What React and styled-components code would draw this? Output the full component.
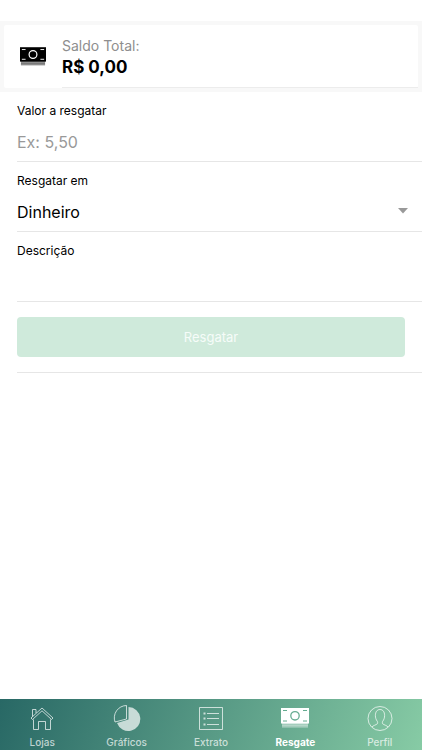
import React, { useState } from 'react'
import styled, { createGlobalStyle } from 'styled-components'

const GlobalStyle = createGlobalStyle`
*{
    box-sizing: border-box;
}
body{
    margin: 0;
    background-color: #fff;
    color: #000;
    font-family: Inter, "Liberation Sans", sans-serif;
}
`;

const Container = styled.div`
min-height: 100vh;
display: flex;
flex-direction: column;
padding-top: 21px;
`;

const Header = styled.header`
background-color: #f8f8f8;
padding: 4px;
`;

const Card = styled.section`
display: flex;
align-items: stretch;
background-color: #fff;
border-radius: 2px;
padding-left: 16px;
`;

const CardIcon = styled.div`
display: flex;
align-items: center;
width: 42px;
`;

const Balance = styled.div`
flex: 1;
height: 63px;
padding-top: 11px;
border-bottom: 1px solid #ececec;
`;

const BalanceLabel = styled.p`
margin: 0;
font-size: 14px;
line-height: 20px;
color: #8e8e8e;
`;

const BalanceValue = styled.h1`
margin: 0;
font-size: 17px;
line-height: 22px;
font-weight: 700;
`;

const Form = styled.form`
flex: 1;
padding-left: 17px;
`;

const Field = styled.div`
position: relative;
display: flex;
flex-direction: column;
height: 70px;
padding-top: 9px;
border-bottom: 1px solid #e6e6e6;
`;

const Label = styled.label`
font-size: 12px;
line-height: 20px;
`;

const Input = styled.input`
width: 100%;
height: 40px;
margin: 0;
padding: 2px 16px 0 0;
border: none;
outline: none;
background: transparent;
font-family: inherit;
font-size: 16px;
color: #000;
&::placeholder{
    color: #999;
    opacity: 1;
}
`;

const Select = styled.select`
width: 100%;
height: 40px;
margin: 0;
padding: 2px 32px 0 0;
border: none;
outline: none;
appearance: none;
background: transparent;
font-family: inherit;
font-size: 16px;
color: #000;
`;

const Arrow = styled.svg`
position: absolute;
right: 13px;
bottom: 17px;
pointer-events: none;
`;

const Actions = styled.div`
padding: 15px 17px 15px 0;
border-bottom: 1px solid #e6e6e6;
`;

const Button = styled.button`
display: block;
width: 100%;
height: 40px;
border: none;
border-radius: 4px;
background-color: #cfeadb;
color: #f6fcf9;
font-family: inherit;
font-size: 13px;
`;

const TabBar = styled.nav`
display: flex;
height: 51px;
background: linear-gradient(110deg, #286865 0%, #87cba5 100%);
`;

const Tab = styled.a`
flex: 1;
display: flex;
flex-direction: column;
align-items: center;
justify-content: space-between;
padding: 5px 0 1px;
font-size: 10px;
line-height: 14px;
font-weight: ${props => props.$active ? 700 : 500};
color: ${props => props.$active ? "#fff" : "rgba(255, 255, 255, 0.7)"};
text-decoration: none;
`;

const MoneyIcon = ({ width, height, fill, detail, stack }) => (
    <svg width={width} height={height} viewBox="0 0 28 22" aria-hidden="true">
        <rect x="1" y="16" width="26" height="4.500" fill={stack} />
        <path d="M1 17.500h26M1 19.500h26" stroke={detail} strokeWidth="0.400" opacity="0.500" />
        <rect x="0" y="1" width="28" height="15.500" fill={fill} />
        <circle cx="14" cy="8.800" r="4.200" fill="none" stroke={detail} strokeWidth="1.300" />
        <path d="M2 3.500h4M22 3.500h4M2 14h4M22 14h4" stroke={detail} strokeWidth="1" />
    </svg>
)

const HomeIcon = () => (
    <svg width="28" height="28" viewBox="0 0 28 28" fill="none" stroke="currentColor" aria-hidden="true">
        <path d="M3 14 14 4l11 10-1.500 1.500L14 6.800l-9.500 8.700z" />
        <path d="M5.500 15.500v10h5v-8h7v8h5v-10M4.500 12.500V5.500h3.500v3.500" />
    </svg>
)

const ChartIcon = () => (
    <svg width="28" height="28" viewBox="0 0 28 28" aria-hidden="true">
        <path d="M15.500 3A12 12 0 1 1 4 19L15.500 15.500z" fill="currentColor" />
        <path d="M13.500 1.500V15L2 18A12.400 12.400 0 0 1 13.500 1.500z" fill="none" stroke="currentColor" />
    </svg>
)

const ListIcon = () => (
    <svg width="28" height="28" viewBox="0 0 28 28" fill="none" stroke="currentColor" aria-hidden="true">
        <path d="M2.500 3.500h23v22h-23zM10 9.500h12M10 14.500h12M10 20.500h12" />
        <path d="M6.500 9.500h2M6.500 14.500h2M6.500 20.500h2" strokeWidth="2" />
    </svg>
)

const UserIcon = () => (
    <svg width="28" height="28" viewBox="0 0 28 28" fill="none" stroke="currentColor" aria-hidden="true">
        <circle cx="14" cy="14.500" r="12" />
        <path d="M6 23c1-1.500 4-2 5.300-3.200.5-.6.4-1.800 0-2.500-1.300-1.600-1.900-3.600-1.900-5.800C9.400 8 11 5.500 14 5.500s4.600 2.500 4.600 6c0 2.200-.6 4.200-1.900 5.800-.4.7-.5 1.900 0 2.500C18 21 21 21.500 22 23" />
    </svg>
)

const tabs = [
    { id: "lojas", title: "Lojas", icon: <HomeIcon /> },
    { id: "graficos", title: "Gráficos", icon: <ChartIcon /> },
    { id: "extrato", title: "Extrato", icon: <ListIcon /> },
    { id: "resgate", title: "Resgate", icon: <MoneyIcon width={28} height={28} fill="#fff" detail="#66ac91" stack="rgba(255, 255, 255, 0.5)" /> },
    { id: "perfil", title: "Perfil", icon: <UserIcon /> },
]

const App = () => {
    const [valor, setValor] = useState("")
    const [tipo, setTipo] = useState("dinheiro")
    const [descricao, setDescricao] = useState("")

    return (
        <Container>
            <GlobalStyle />
            <Header>
                <Card>
                    <CardIcon>
                        <MoneyIcon width={26} height={21} fill="#000" detail="#fff" stack="#777" />
                    </CardIcon>
                    <Balance>
                        <BalanceLabel>Saldo Total:</BalanceLabel>
                        <BalanceValue>R$ 0,00</BalanceValue>
                    </Balance>
                </Card>
            </Header>
            <Form onSubmit={(e) => e.preventDefault()}>
                <Field>
                    <Label htmlFor="valor">Valor a resgatar</Label>
                    <Input id="valor" inputMode="decimal" placeholder="Ex: 5,50" value={valor} onChange={(e) => setValor(e.target.value)} />
                </Field>
                <Field>
                    <Label htmlFor="tipo">Resgatar em</Label>
                    <Select id="tipo" value={tipo} onChange={(e) => setTipo(e.target.value)}>
                        <option value="dinheiro">Dinheiro</option>
                    </Select>
                    <Arrow width="12" height="6" viewBox="0 0 12 6" aria-hidden="true">
                        <path d="M1 0h10L6 5.500z" fill="#999" />
                    </Arrow>
                </Field>
                <Field>
                    <Label htmlFor="descricao">Descrição</Label>
                    <Input id="descricao" value={descricao} onChange={(e) => setDescricao(e.target.value)} />
                </Field>
                <Actions>
                    <Button type="submit" disabled={!valor}>Resgatar</Button>
                </Actions>
            </Form>
            <TabBar>
                {tabs.map(tab =>
                <Tab href={"#" + tab.id} key={tab.id} $active={tab.id === "resgate"}>
                    {tab.icon}
                    {tab.title}
                </Tab>
                )}
            </TabBar>
        </Container>
    )
}

export default App
